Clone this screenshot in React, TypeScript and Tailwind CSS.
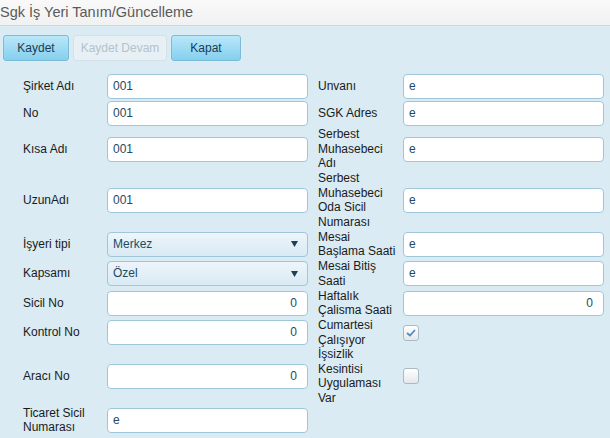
import { type ReactNode } from "react"

type Field =
  | { kind: "text"; value: string; right?: boolean }
  | { kind: "select"; value: string }
  | { kind: "check"; checked: boolean }

const rows: { left: string; l: Field; right?: string; r?: Field }[] = [
  { left: "Şirket Adı", l: { kind: "text", value: "001" }, right: "Unvanı", r: { kind: "text", value: "e" } },
  { left: "No", l: { kind: "text", value: "001" }, right: "SGK Adres", r: { kind: "text", value: "e" } },
  { left: "Kısa Adı", l: { kind: "text", value: "001" }, right: "Serbest Muhasebeci Adı", r: { kind: "text", value: "e" } },
  { left: "UzunAdı", l: { kind: "text", value: "001" }, right: "Serbest Muhasebeci Oda Sicil Numarası", r: { kind: "text", value: "e" } },
  { left: "İşyeri tipi", l: { kind: "select", value: "Merkez" }, right: "Mesai Başlama Saati", r: { kind: "text", value: "e" } },
  { left: "Kapsamı", l: { kind: "select", value: "Özel" }, right: "Mesai Bitiş Saati", r: { kind: "text", value: "e" } },
  { left: "Sicil No", l: { kind: "text", value: "0", right: true }, right: "Haftalık Çalisma Saati", r: { kind: "text", value: "0", right: true } },
  { left: "Kontrol No", l: { kind: "text", value: "0", right: true }, right: "Cumartesi Çalışıyor", r: { kind: "check", checked: true } },
  { left: "Aracı No", l: { kind: "text", value: "0", right: true }, right: "İşsizlik Kesintisi Uygulaması Var", r: { kind: "check", checked: false } },
  { left: "Ticaret Sicil Numarası", l: { kind: "text", value: "e" } },
]

function Control({ f }: { f: Field }) {
  if (f.kind === "text") {
    return (
      <div
        className={`flex h-[25px] w-full items-center rounded-[4px] border border-[#9fc7da] bg-white text-[#1d4a63] ${
          f.right ? "justify-end pr-[10px]" : "pl-[5px]"
        }`}
      >
        {f.value}
      </div>
    )
  }
  if (f.kind === "select") {
    return (
      <div className="flex h-[25px] w-full items-center justify-between rounded-[4px] border border-[#9fc7da] bg-gradient-to-b from-[#edf5fa] to-[#d9eaf4] pl-[5px] pr-[9px] text-[#1d4a63]">
        <span>{f.value}</span>
        <svg width="7" height="6" viewBox="0 0 7 6">
          <path d="M0 0 L7 0 L3.5 6 Z" fill="#1f3f52" />
        </svg>
      </div>
    )
  }
  return (
    <div className="flex h-[16px] w-[16px] items-center justify-center rounded-[3px] border border-[#a9bac4] bg-gradient-to-b from-white to-[#e4e8eb]">
      {f.checked && (
        <svg width="10" height="8" viewBox="0 0 10 8">
          <path d="M1 4 L4 6.5 L9 1" fill="none" stroke="#4d8cc4" strokeWidth="1.8" />
        </svg>
      )}
    </div>
  )
}

function Button({ children, disabled }: { children: ReactNode; disabled?: boolean }) {
  return (
    <div
      className={`flex h-[26px] items-center justify-center rounded-[3px] border ${
        disabled
          ? "border-[#d3e0e8] bg-[#e6f0f5] text-[#b4c2cb]"
          : "border-[#7cbcd9] bg-gradient-to-b from-[#b9e7fa] to-[#84cfee] text-[#1b3c52]"
      }`}
    >
      {children}
    </div>
  )
}

export default function App() {
  return (
    <div className="h-[438px] w-[610px] overflow-hidden bg-[#daebf3] font-['Liberation_Sans',Arial,sans-serif] text-[12px] text-[#1a1a1a]">
      <div className="h-[26px] border-b border-[#d3d5d6] bg-gradient-to-b from-[#f9f9f9] to-[#f1f1f1] text-[14.5px] leading-[24px] text-[#5a5a5a]">
        Sgk İş Yeri Tanım/Güncelleme
      </div>

      <div className="flex gap-[4px] pl-[3px] pt-[9px]">
        <div className="w-[66px]"><Button>Kaydet</Button></div>
        <div className="w-[94px]"><Button disabled>Kaydet Devam</Button></div>
        <div className="w-[70px]"><Button>Kapat</Button></div>
      </div>

      <div className="mt-[12px] grid grid-cols-[84px_201px_95px_201px] grid-rows-[27px_27px_44px_58px_30px_29px_30px_29px_58px_30px] items-center pl-[23px] leading-[14.5px]">
        {rows.map((row) => (
          <div key={row.left} className="contents">
            <div className="w-[78px]">{row.left}</div>
            <Control f={row.l} />
            <div className="w-[88px] pl-[10px]">{row.right}</div>
            <div>{row.r && <Control f={row.r} />}</div>
          </div>
        ))}
      </div>
    </div>
  )
}
